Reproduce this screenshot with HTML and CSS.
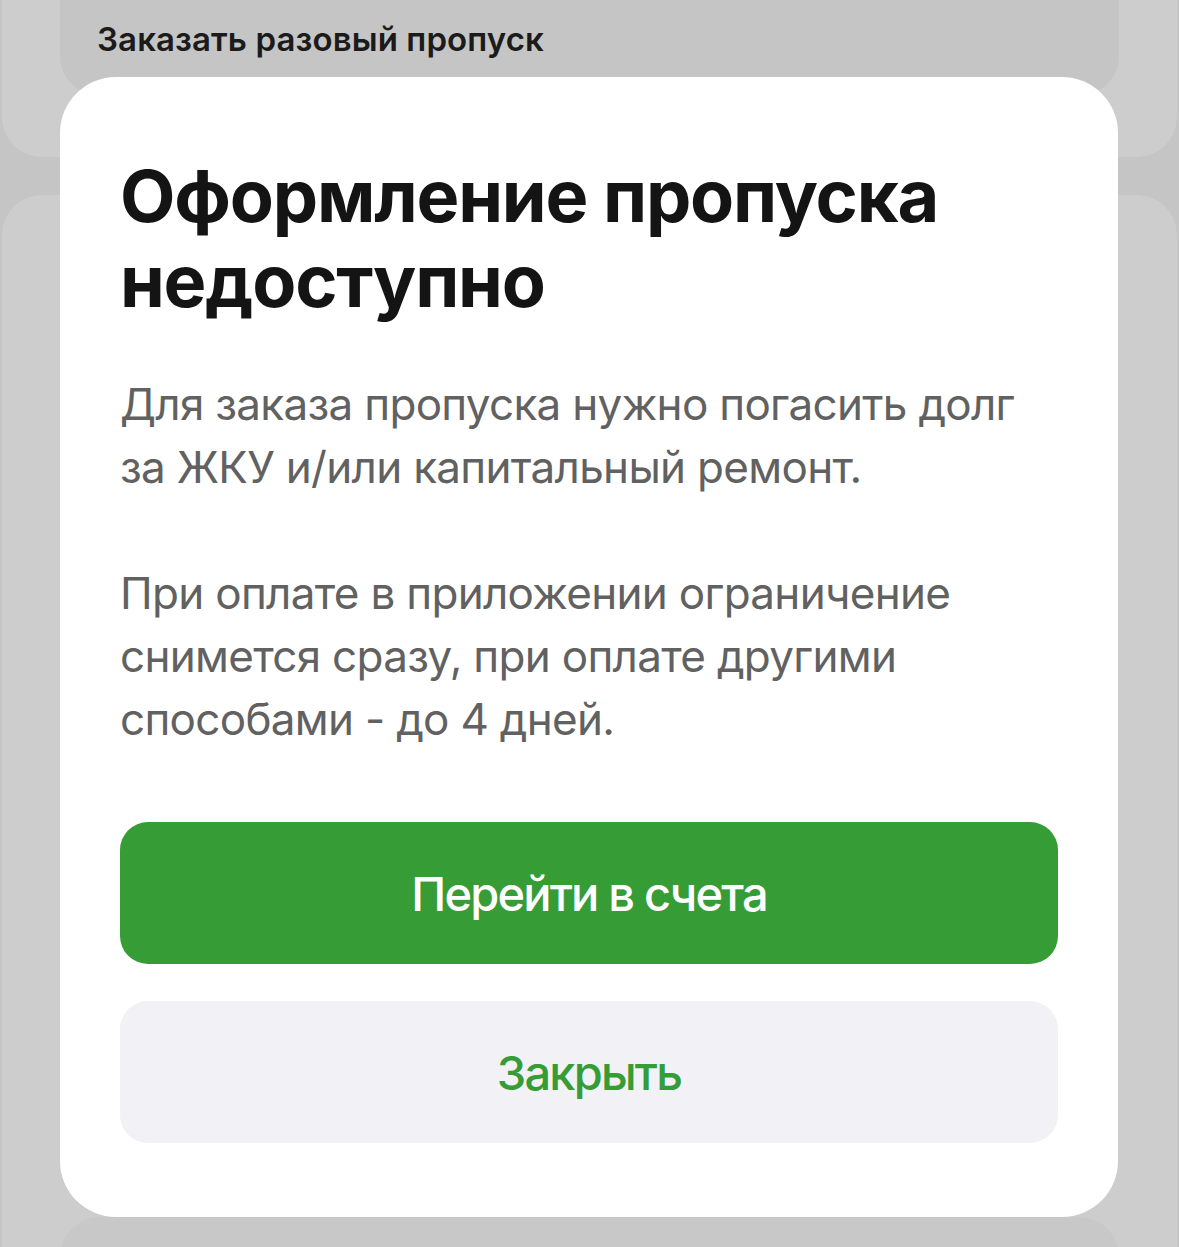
FILE: index.html
```html
<!DOCTYPE html>
<html lang="ru">
<head>
<meta charset="utf-8">
<title>Оформление пропуска недоступно</title>
<link rel="stylesheet" href="styles.css">
</head>
<body>
<div class="screen">
  <div class="bg-card bg-card-top">
    <div class="bg-action">Заказать разовый пропуск</div>
  </div>
  <div class="bg-card bg-card-next">
    <div class="bg-item"></div>
  </div>

  <div class="modal">
    <h1 class="modal-title">Оформление пропуска недоступно</h1>
    <div class="modal-text">
      <p>Для заказа пропуска нужно погасить долг за&nbsp;ЖКУ и/или капитальный ремонт.</p>
      <p>При оплате в приложении ограничение снимется сразу, при оплате другими способами - до 4 дней.</p>
    </div>
    <div class="modal-actions">
      <button class="btn btn-primary">Перейти в счета</button>
      <button class="btn btn-secondary">Закрыть</button>
    </div>
  </div>
</div>
</body>
</html>
```

FILE: styles.css
```css
* { box-sizing: border-box; }
html, body {
  margin: 0;
  padding: 0;
}
body {
  background: #c5c5c5;
  font-family: Inter, "Noto Sans", sans-serif;
  width: 1179px;
  height: 1247px;
  overflow: hidden;
}
.screen {
  position: relative;
  width: 1179px;
  height: 1247px;
  display: flex;
  flex-direction: column;
  gap: 38px;
}
.bg-card {
  background: #cdcdcd;
  margin: 0 2px;
}
.bg-card-top {
  height: 157px;
  border-radius: 0 0 40px 40px;
  padding: 0 58px;
}
.bg-action {
  height: 96px;
  background: #c5c5c5;
  border-radius: 0 0 40px 40px;
  padding: 19px 0 0 37px;
  font-size: 33px;
  font-weight: 600;
  color: #1b1b1b;
  letter-spacing: 0.1px;
}
.bg-card-next {
  flex: 1;
  border-radius: 40px 40px 0 0;
  padding: 0 58px;
  display: flex;
  flex-direction: column;
  justify-content: flex-end;
}
.bg-item {
  height: 40px;
  margin-bottom: -10px;
  border-radius: 40px 40px 0 0;
  background: #c8c8c8;
}
.modal {
  position: absolute;
  left: 60px;
  top: 77px;
  width: 1058px;
  height: 1140px;
  background: #fff;
  border-radius: 56px;
  padding: 76px 60px 74px;
  display: flex;
  flex-direction: column;
}
.modal-title {
  margin: 0;
  font-size: 72px;
  line-height: 85px;
  font-weight: 700;
  color: #141414;
  letter-spacing: -1.2px;
}
.modal-text {
  margin-top: 50px;
  color: #616161;
  font-size: 44px;
  line-height: 63px;
  letter-spacing: -0.7px;
}
.modal-text p {
  margin: 0;
}
.modal-text p + p {
  margin-top: 63px;
}
.modal-actions {
  margin-top: auto;
  display: flex;
  flex-direction: column;
  gap: 37px;
}
.btn {
  height: 142px;
  border: none;
  border-radius: 28px;
  font-family: inherit;
  font-size: 47px;
  font-weight: 500;
  letter-spacing: -1.8px;
}
.btn-primary {
  background: #369c36;
  color: #fff;
}
.btn-secondary {
  background: #f1f1f6;
  color: #369c36;
}
```
